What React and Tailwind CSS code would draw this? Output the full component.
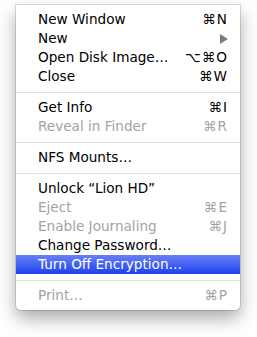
import React from 'react'

const items = [
  { label: 'New Window', key: '⌘N' },
  { label: 'New', submenu: true },
  { label: 'Open Disk Image…', key: '⌥⌘O' },
  { label: 'Close', key: '⌘W' },
  'sep',
  { label: 'Get Info', key: '⌘I' },
  { label: 'Reveal in Finder', key: '⌘R', disabled: true },
  'sep',
  { label: 'NFS Mounts…' },
  'sep',
  { label: 'Unlock “Lion HD”' },
  { label: 'Eject', key: '⌘E', disabled: true },
  { label: 'Enable Journaling', key: '⌘J', disabled: true },
  { label: 'Change Password…' },
  { label: 'Turn Off Encryption…', active: true },
  'sep',
  { label: 'Print…', key: '⌘P', disabled: true },
]

function Row({ item }) {
  const color = item.active
    ? 'text-white bg-gradient-to-b from-[#6a7ff5] to-[#1f3ded]'
    : item.disabled
    ? 'text-[#a3a3a3]'
    : 'text-black'
  return (
    <div className={`h-[19px] flex items-center justify-between pl-[22px] pr-[12px] ${color}`}>
      <span>{item.label}</span>
      {item.key && (
        <span className={`tracking-[1px] ${item.disabled ? 'text-[#a3a3a3]' : 'text-black'}`}>{item.key}</span>
      )}
      {item.submenu && (
        <svg width="8" height="10" viewBox="0 0 8 10">
          <path d="M0 0 L8 5 L0 10 Z" fill="#7c7c7c" />
        </svg>
      )}
    </div>
  )
}

export default function App() {
  return (
    <div className="w-[257px] h-[337px] bg-white pt-[5px] pl-[16px]">
      <div
        className="w-[224px] bg-white py-[5px] rounded-b-[5px] shadow-[0_8px_18px_rgba(0,0,0,0.35),0_0_0_1px_rgba(0,0,0,0.12)] text-[13.6px] leading-none"
        style={{ fontFamily: '"DejaVu Sans", "Lucida Grande", sans-serif' }}
      >
        {items.map((it, i) =>
          it === 'sep' ? (
            <div key={i} className="h-[12px] flex items-center">
              <div className="h-px w-full bg-[#e2e2e2]" />
            </div>
          ) : (
            <Row key={i} item={it} />
          )
        )}
      </div>
    </div>
  )
}
